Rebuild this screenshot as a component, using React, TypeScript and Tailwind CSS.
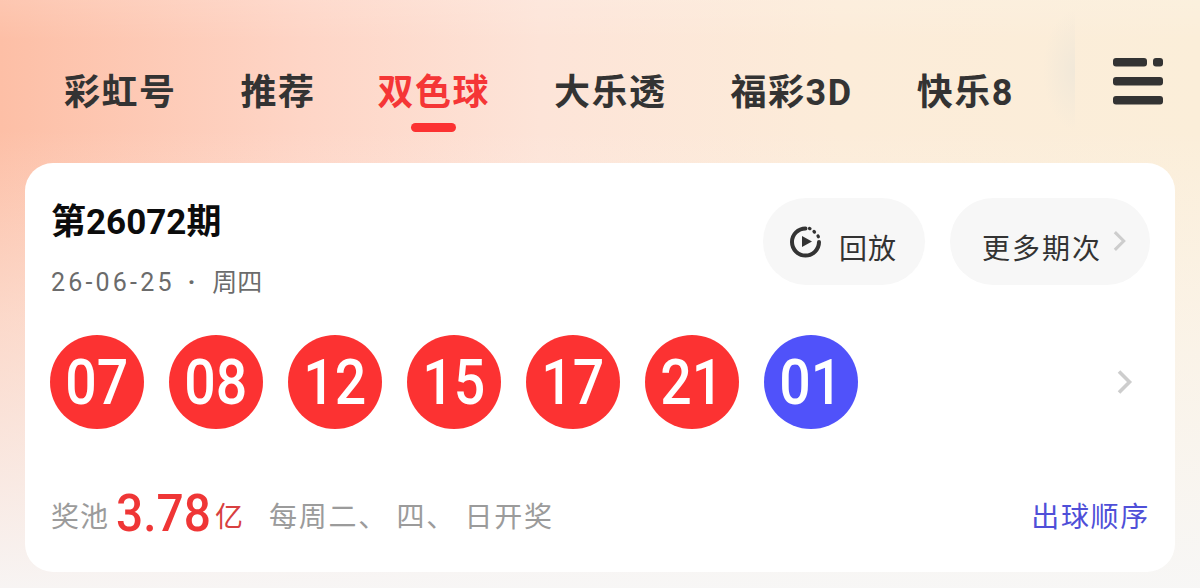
const CJK = "font-['Roboto','Noto_Sans_CJK_SC',sans-serif]";

const TABS = [
  { label: "彩虹号", gap: "ml-0" },
  { label: "推荐", gap: "ml-[64px]" },
  { label: "双色球", gap: "ml-[62px]", active: true },
  { label: "大乐透", gap: "ml-[64px]" },
  { label: "福彩3D", gap: "ml-[64px]" },
  { label: "快乐8", gap: "ml-[64px]" },
];

const RED_BALLS = ["07", "08", "12", "15", "17", "21"];

function Ball({ value, blue }: { value: string; blue?: boolean }) {
  return (
    <div
      className={`flex h-[94px] w-[94px] shrink-0 items-center justify-center rounded-full text-[63px] font-medium leading-none text-white ${
        blue ? "bg-[#5052fa]" : "bg-[#fc3232]"
      }`}
    >
      <span className="inline-block scale-x-[0.88]">{value}</span>
    </div>
  );
}

function Chevron({ className }: { className: string }) {
  return (
    <svg viewBox="0 0 16 26" fill="none" className={className}>
      <path d="M2.5 2.5 13 13 2.5 23.5" stroke="#cdcdcd" strokeWidth="3.6" />
    </svg>
  );
}

export default function App() {
  return (
    <div
      className={`relative h-[588px] w-[1200px] overflow-hidden bg-[linear-gradient(180deg,rgba(255,255,255,0.12)_0px,rgba(255,255,255,0)_40px,rgba(255,255,255,0)_130px,rgba(250,248,246,0.45)_320px,rgba(247,247,247,0.95)_100%),linear-gradient(90deg,#fdbfa6_0%,#fed5c6_25%,#fde4d8_45%,#fcecd9_70%,#fbeed9_100%)] ${CJK}`}
    >
      {/* soft shade left of the menu button */}
      <div className="pointer-events-none absolute left-[1035px] top-[10px] h-[120px] w-[40px] bg-[radial-gradient(ellipse_32px_60px_at_100%_50%,#f1e8d9,rgba(241,232,217,0))]" />

      {/* tabs */}
      <div className="relative flex h-[163px] items-start pl-[64px] pt-[70px]">
        {TABS.map((t) => (
          <div key={t.label} className={`flex flex-col items-center ${t.gap}`}>
            <span
              className={`text-[36px] font-bold leading-[46px] tracking-[1.5px] ${
                t.active ? "text-[#f53636]" : "text-[#333333]"
              }`}
            >
              {t.label}
            </span>
            {t.active && <span className="mt-[7px] h-[9px] w-[45px] rounded-full bg-[#fc3232]" />}
          </div>
        ))}
        <svg viewBox="0 0 50 47" className="ml-[99px] mt-[-12px] h-[47px] w-[50px]" fill="#333333">
          <rect x="0" y="0" width="34" height="8.5" rx="3" />
          <rect x="40" y="0" width="10" height="8.5" rx="3" />
          <rect x="0" y="19" width="50" height="8.5" rx="3" />
          <rect x="0" y="38" width="50" height="8.5" rx="3" />
        </svg>
      </div>

      {/* card */}
      <div className="relative mx-[25px] h-[409px] rounded-[28px] bg-white px-[25px] pt-[35px]">
        <div className="flex items-start justify-between">
          <div className="pl-[1px]">
            <div className="text-[35px] font-bold leading-[50px] text-[#0c0c0c]">第26072期</div>
            <div className="mt-[18px] flex text-[25px] leading-[34px] text-[#6b6b6b]">
              <span className="tracking-[3.2px]">26-06-25</span>
              <span className="ml-[13px] font-bold">·</span>
              <span className="ml-[17px]">周四</span>
            </div>
          </div>
          <div className="flex gap-[25px]">
            <div className="flex h-[87px] w-[162px] items-start rounded-full bg-[#f7f7f7] pl-[27px] pt-[28px]">
              <svg viewBox="0 0 32 32" fill="none" className="h-[32px] w-[32px]">
                <path
                  d="M15.5 2.5A13.5 13.5 0 1 0 29 16"
                  stroke="#333333"
                  strokeWidth="4"
                  strokeLinecap="round"
                />
                <path d="M19.5 2.5 20 2.7M24 5.5 24.5 6M28 10 28.4 10.7" stroke="#333333" strokeWidth="3.2" strokeLinecap="round" />
                <path d="M12 10 22 15.5 12 21Z" fill="#333333" />
              </svg>
              <span className="ml-[17px] mt-[6px] text-[28px] leading-[36px] tracking-[1px] text-[#333333]">回放</span>
            </div>
            <div className="flex h-[87px] w-[200px] items-start rounded-full bg-[#f7f7f7] pl-[32px] pt-[34px]">
              <span className="text-[28px] leading-[36px] tracking-[2px] text-[#333333]">更多期次</span>
              <Chevron className="ml-[10px] mt-[-2px] h-[22px] w-[15px]" />
            </div>
          </div>
        </div>

        <div className="mt-[35px] flex items-center gap-[25px]">
          {RED_BALLS.map((n) => (
            <Ball key={n} value={n} />
          ))}
          <Ball value="01" blue />
          <Chevron className="ml-auto mr-[17px] h-[26px] w-[17px]" />
        </div>

        <div className="mt-[62px] flex items-end justify-between leading-none">
          <div className="flex items-end pl-[1px]">
            <span className="mb-[1px] text-[28px] leading-[36px] tracking-[1px] text-[#9b9b9b]">奖池</span>
            <span className="ml-[7px] w-[94px] origin-left scale-x-[0.92] whitespace-nowrap text-[52px] font-medium leading-[46px] text-[#ef3636]">
              3.78
            </span>
            <span className="mb-[1px] ml-[5px] text-[28px] leading-[36px] text-[#d84040]">亿</span>
            <span className="mb-[1px] ml-[26px] text-[28px] leading-[36px] tracking-[1.7px] text-[#9b9b9b]">每周二、 四、 日开奖</span>
          </div>
          <span className="mb-[1px] text-[28px] leading-[36px] tracking-[1.7px] text-[#4f4fd8]">出球顺序</span>
        </div>
      </div>
    </div>
  );
}
